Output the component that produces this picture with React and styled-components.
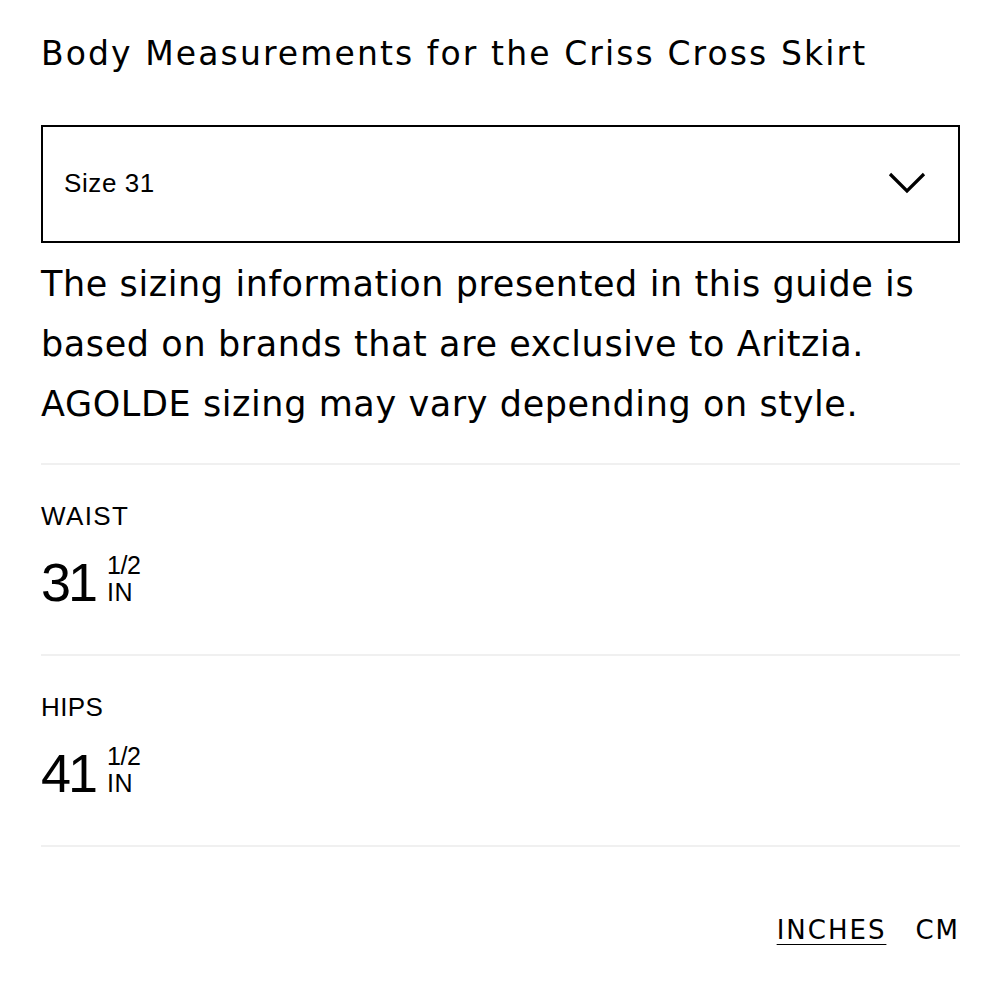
import React, { useState } from "react";
import styled, { createGlobalStyle } from "styled-components";

const GlobalStyle = createGlobalStyle`
  body {
    margin: 0;
    background: #fff;
    color: #000;
    font-family: "DejaVu Sans", "Liberation Sans", sans-serif;
  }
`;

const Page = styled.div`
  width: 1000px;
  box-sizing: border-box;
  padding: 36px 40px 0 41px;
`;

const Title = styled.h1`
  margin: 0;
  font-family: "DejaVu Sans", sans-serif;
  font-size: 33px;
  font-weight: 400;
  line-height: 36px;
  letter-spacing: 2.1px;
`;

const SelectBox = styled.div`
  margin-top: 53px;
  height: 118px;
  box-sizing: border-box;
  border: 2px solid #000;
  display: flex;
  align-items: center;
  justify-content: space-between;
  padding: 0 32px 2px 21px;
`;

const SelectValue = styled.span`
  font-family: "Liberation Sans", sans-serif;
  font-size: 26px;
  letter-spacing: 0.6px;
`;

const Intro = styled.p`
  margin: 11px 0 0;
  font-family: "DejaVu Sans", sans-serif;
  font-size: 35px;
  line-height: 60px;
  letter-spacing: 0.6px;
`;

const Divider = styled.hr`
  margin: ${props => props.top || 0}px 0 0;
  border: none;
  height: 2px;
  background: #f0f0f0;
`;

const Measure = styled.section`
  padding: 36px 0 42px;
`;

const Label = styled.div`
  font-family: "Liberation Sans", sans-serif;
  font-size: 26px;
  line-height: 30px;
  letter-spacing: ${props => (props.wide ? "1.4px" : "0.4px")};
`;

const ValueRow = styled.div`
  margin-top: 21px;
  display: flex;
  align-items: flex-start;
  height: 60px;
`;

const Whole = styled.span`
  font-family: "Liberation Sans", sans-serif;
  font-size: 54px;
  line-height: 60px;
  letter-spacing: -3px;
`;

const Stack = styled.div`
  margin: 0 0 0 12px;
  display: flex;
  flex-direction: column;
  font-family: "Liberation Sans", sans-serif;
  line-height: 27px;
`;

const Fraction = styled.span`
  font-size: 25px;
  letter-spacing: -0.5px;
`;

const Unit = styled.span`
  font-size: 25px;
  letter-spacing: 0.5px;
`;

const Units = styled.div`
  display: flex;
  justify-content: flex-end;
  gap: 29px;
  margin-top: 68px;
`;

const UnitButton = styled.button`
  border: none;
  background: none;
  padding: 0;
  font-family: "DejaVu Sans", sans-serif;
  font-size: 26px;
  letter-spacing: 2px;
  color: #000;
  cursor: pointer;
  text-decoration: ${props => (props.active ? "underline" : "none")};
  text-decoration-thickness: 2px;
  text-underline-offset: 5px;
`;

const Chevron = () => (
  <svg width="38" height="24" viewBox="0 0 38 24">
    <polyline
      points="2,3 19,20 36,3"
      fill="none"
      stroke="#000"
      strokeWidth="3.2"
    />
  </svg>
);

const measurements = [
  { name: "WAIST", whole: "31", frac: "1/2", wide: true },
  { name: "HIPS", whole: "41", frac: "1/2" }
];

function App() {
  const [unit, setUnit] = useState("in");
  return (
    <Page>
      <GlobalStyle />
      <Title>Body Measurements for the Criss Cross Skirt</Title>
      <SelectBox>
        <SelectValue>Size 31</SelectValue>
        <Chevron />
      </SelectBox>
      <Intro>
        The sizing information presented in this guide is based on brands that
        are exclusive to Aritzia. AGOLDE sizing may vary depending on style.
      </Intro>
      <Divider top={29} />
      {measurements.map(m => (
        <React.Fragment key={m.name}>
          <Measure>
            <Label wide={m.wide}>{m.name}</Label>
            <ValueRow>
              <Whole>{m.whole}</Whole>
              <Stack>
                <Fraction>{m.frac}</Fraction>
                <Unit>IN</Unit>
              </Stack>
            </ValueRow>
          </Measure>
          <Divider />
        </React.Fragment>
      ))}
      <Units>
        <UnitButton active={unit === "in"} onClick={() => setUnit("in")}>
          INCHES
        </UnitButton>
        <UnitButton active={unit === "cm"} onClick={() => setUnit("cm")}>
          CM
        </UnitButton>
      </Units>
    </Page>
  );
}

export default App;
